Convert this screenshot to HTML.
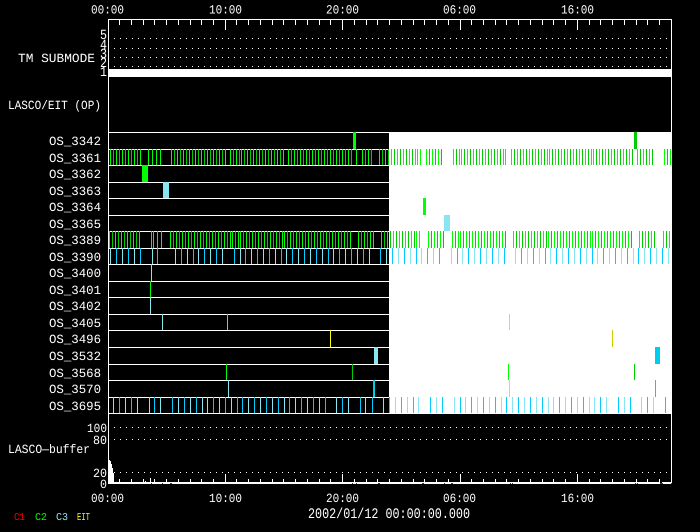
<!DOCTYPE html>
<html><head><meta charset="utf-8"><style>
html,body{margin:0;padding:0;background:#000;width:700px;height:532px;overflow:hidden}
svg{display:block}
text{font-family:"Liberation Mono",monospace;font-size:12.5px;fill:#fff;text-rendering:geometricPrecision}
</style></head><body>
<svg width="700" height="532" viewBox="0 0 700 532" xmlns="http://www.w3.org/2000/svg">
<defs>
<path id="g1" fill="none" stroke-width="16" d="M110 157h31M148 157h1M152 157h1M156 157h1M160 157h1M171 157h55M230 157h10M241 157h43M288 157h64M356 157h1M362 157h10M379 157h10M391 157h25M417 157h1M420 157h1M426 157h16M453 157h7M461 157h43M505 157h1M511 157h37M549 157h43M593 157h40M637 157h16M664 157h7"/>
<path id="g2" fill="none" stroke-width="17" d="M109 239.5h33M151 239.5h1M153 239.5h1M157 239.5h1M161 239.5h1M170 239.5h61M232 239.5h7M240 239.5h43M284 239.5h67M358 239.5h13M373 239.5h1M381 239.5h34M416 239.5h1M419 239.5h1M428 239.5h16M452 239.5h7M460 239.5h48M513 239.5h34M548 239.5h43M592 239.5h40M639 239.5h16M663 239.5h7"/>
<path id="ca" fill="none" stroke-width="16" d="M110 256h31M152 256h1M175 256h19M198 256h25M286 256h43M333 256h37M421 256h19M451 256h7M462 256h43M515 256h31M550 256h43M597 256h37M113 405h25M149 405h1M207 405h31M336 405h13M365 405h1M383 405h31M418 405h1M454 405h7M465 405h37M553 405h37M594 405h13M641 405h13"/>
<path id="cb" fill="none" stroke-width="16" d="M157 256h1M234 256h7M245 256h37M380 256h37M638 256h31M154 405h7M172 405h31M242 405h43M289 405h37M360 405h1M372 405h1M430 405h13M506 405h43M618 405h13M665 405h1"/>
</defs>
<g shape-rendering="crispEdges">
<rect x="389" y="132" width="283" height="281" fill="#fff"/>
<rect x="109" y="69" width="563" height="8" fill="#fff"/>
<path stroke="#fff" stroke-width="1" fill="none" d="M108 132.5H389M108 149.5H389M108 165.5H389M108 182.5H389M108 198.5H389M108 215.5H389M108 231.5H389M108 248.5H389M108 264.5H389M108 281.5H389M108 297.5H389M108 314.5H389M108 330.5H389M108 347.5H389M108 364.5H389M108 380.5H389M108 397.5H389M108 413.5H672M108.5 19V484M671.5 19V484M108 19.5H672"/>
<path fill="none" stroke="#fff" stroke-width="1" stroke-dasharray="1 5" d="M114 38.5H667M114 48.5H667M114 57.5H667M114 66.5H667M114 427.5H667M114 439.5H667M114 472.5H667"/>
<!-- OS_3361 / OS_3389 -->
<use href="#g1" stroke="#00ff00" stroke-dasharray="1 5"/>
<use href="#g1" stroke="#00cc00" stroke-dasharray="1 5" stroke-dashoffset="-3"/>
<use href="#g2" stroke="#00ff00" stroke-dasharray="1 5"/>
<use href="#g2" stroke="#00cc00" stroke-dasharray="1 5" stroke-dashoffset="-3"/>
<!-- OS_3390 / OS_3695 -->
<use href="#ca" stroke="#88e6f0" stroke-dasharray="1 11"/>
<use href="#ca" stroke="#00ccff" stroke-dasharray="1 11" stroke-dashoffset="-6"/>
<use href="#cb" stroke="#00ccff" stroke-dasharray="1 11"/>
<use href="#cb" stroke="#88e6f0" stroke-dasharray="1 11" stroke-dashoffset="-6"/>
<!-- single events -->
<rect x="353" y="132" width="3" height="17" fill="#00ff00"/><rect x="634" y="132" width="3" height="17" fill="#00cc00"/>
<rect x="142" y="165" width="6" height="17" fill="#00ff00"/>
<rect x="163" y="182" width="6" height="16" fill="#88e6f0"/>
<rect x="423" y="198" width="3" height="17" fill="#00ff00"/>
<rect x="444" y="215" width="6" height="16" fill="#88e6f0"/>
<rect x="151" y="264" width="1" height="17" fill="#88e6f0"/>
<rect x="150" y="281" width="1" height="16" fill="#00ff00"/>
<rect x="150" y="297" width="1" height="17" fill="#88e6f0"/>
<rect x="162" y="314" width="1" height="16" fill="#88e6f0"/><rect x="227" y="314" width="1" height="16" fill="#44d8f8"/><rect x="509" y="314" width="1" height="16" fill="#88e6f0"/>
<rect x="330" y="330" width="1" height="17" fill="#ffff00"/><rect x="612" y="330" width="1" height="17" fill="#cccc00"/>
<rect x="374" y="347" width="4" height="17" fill="#88e6f0"/><rect x="655" y="347" width="5" height="17" fill="#00ccee"/>
<rect x="226" y="364" width="1" height="16" fill="#00ff00"/><rect x="352" y="364" width="1" height="16" fill="#00cc00"/><rect x="508" y="364" width="1" height="16" fill="#00ff00"/><rect x="634" y="364" width="1" height="16" fill="#00cc00"/>
<rect x="228" y="380" width="1" height="17" fill="#88e6f0"/><rect x="373" y="380" width="2" height="17" fill="#00ccee"/><rect x="509" y="380" width="1" height="17" fill="#88e6f0"/><rect x="655" y="380" width="1" height="17" fill="#22c0dd"/>
<!-- axes ticks -->
<path stroke="#fff" fill="none" d="M119.5 19V25M131.5 19V25M143.5 19V25M154.5 19V25M166.5 19V25M178.5 19V25M190.5 19V25M201.5 19V25M213.5 19V25M225.5 19V30M236.5 19V25M248.5 19V25M260.5 19V25M272.5 19V25M283.5 19V25M295.5 19V25M307.5 19V25M319.5 19V25M330.5 19V25M342.5 19V30M354.5 19V25M366.5 19V25M377.5 19V25M389.5 19V25M401.5 19V25M413.5 19V25M424.5 19V25M436.5 19V25M448.5 19V25M460.5 19V30M471.5 19V25M483.5 19V25M495.5 19V25M506.5 19V25M518.5 19V25M530.5 19V25M542.5 19V25M553.5 19V25M565.5 19V25M577.5 19V30M589.5 19V25M600.5 19V25M612.5 19V25M624.5 19V25M636.5 19V25M647.5 19V25M659.5 19V25"/>
<path stroke="#fff" fill="none" d="M119.5 479V483M131.5 479V483M143.5 479V483M154.5 479V483M166.5 479V483M178.5 479V483M190.5 479V483M201.5 479V483M213.5 479V483M225.5 474V483M236.5 479V483M248.5 479V483M260.5 479V483M272.5 479V483M283.5 479V483M295.5 479V483M307.5 479V483M319.5 479V483M330.5 479V483M342.5 474V483M354.5 479V483M366.5 479V483M377.5 479V483M389.5 479V483M401.5 479V483M413.5 479V483M424.5 479V483M436.5 479V483M448.5 479V483M460.5 474V483M471.5 479V483M483.5 479V483M495.5 479V483M506.5 479V483M518.5 479V483M530.5 479V483M542.5 479V483M553.5 479V483M565.5 479V483M577.5 474V483M589.5 479V483M600.5 479V483M612.5 479V483M624.5 479V483M636.5 479V483M647.5 479V483M659.5 479V483M150.5 478V483M145.5 481V483"/>
<rect x="108" y="482" width="552" height="2" fill="#fff"/><rect x="662" y="482" width="10" height="2" fill="#fff"/>
<!-- buffer spike -->
<path fill="#fff" d="M109 460H110V461H111V464H112V468H113V473H114V483H109Z"/>
<path fill="#cc0000" d="M151 483h1v1h-1zM162 483h1v1h-1zM170 483h2v1h-2zM352 483h1v1h-1zM356 483h1v1h-1zM378 483h2v1h-2zM422 483h2v1h-2zM444 483h1v1h-1zM451 483h2v1h-2zM510 483h1v1h-1zM512 483h1v1h-1zM635 483h1v1h-1zM637 483h1v1h-1zM660 483h3v1h-3zM671 483h1v1h-1z"/>
</g>
<!-- text -->
<text x="91" y="13.5" textLength="33" lengthAdjust="spacingAndGlyphs">00:00</text>
<text x="209" y="13.5" textLength="33" lengthAdjust="spacingAndGlyphs">10:00</text>
<text x="326" y="13.5" textLength="33" lengthAdjust="spacingAndGlyphs">20:00</text>
<text x="443" y="13.5" textLength="33" lengthAdjust="spacingAndGlyphs">06:00</text>
<text x="561" y="13.5" textLength="33" lengthAdjust="spacingAndGlyphs">16:00</text>
<text x="100" y="39" textLength="7" lengthAdjust="spacingAndGlyphs" style="font-size:14px">5</text>
<text x="100" y="49" textLength="7" lengthAdjust="spacingAndGlyphs" style="font-size:14px">4</text>
<text x="100" y="58" textLength="7" lengthAdjust="spacingAndGlyphs" style="font-size:14px">3</text>
<text x="100" y="67" textLength="7" lengthAdjust="spacingAndGlyphs" style="font-size:14px">2</text>
<text x="100" y="76" textLength="7" lengthAdjust="spacingAndGlyphs" style="font-size:14px">1</text>
<text x="18" y="62" textLength="77" lengthAdjust="spacingAndGlyphs">TM SUBMODE</text>
<text x="8" y="109" textLength="93" lengthAdjust="spacingAndGlyphs">LASCO/EIT (OP)</text>
<g>
<text x="49" y="145" textLength="52" lengthAdjust="spacingAndGlyphs">OS_3342</text>
<text x="49" y="162" textLength="52" lengthAdjust="spacingAndGlyphs">OS_3361</text>
<text x="49" y="178" textLength="52" lengthAdjust="spacingAndGlyphs">OS_3362</text>
<text x="49" y="195" textLength="52" lengthAdjust="spacingAndGlyphs">OS_3363</text>
<text x="49" y="211" textLength="52" lengthAdjust="spacingAndGlyphs">OS_3364</text>
<text x="49" y="228" textLength="52" lengthAdjust="spacingAndGlyphs">OS_3365</text>
<text x="49" y="244" textLength="52" lengthAdjust="spacingAndGlyphs">OS_3389</text>
<text x="49" y="261" textLength="52" lengthAdjust="spacingAndGlyphs">OS_3390</text>
<text x="49" y="277" textLength="52" lengthAdjust="spacingAndGlyphs">OS_3400</text>
<text x="49" y="294" textLength="52" lengthAdjust="spacingAndGlyphs">OS_3401</text>
<text x="49" y="310" textLength="52" lengthAdjust="spacingAndGlyphs">OS_3402</text>
<text x="49" y="327" textLength="52" lengthAdjust="spacingAndGlyphs">OS_3405</text>
<text x="49" y="343" textLength="52" lengthAdjust="spacingAndGlyphs">OS_3496</text>
<text x="49" y="360" textLength="52" lengthAdjust="spacingAndGlyphs">OS_3532</text>
<text x="49" y="377" textLength="52" lengthAdjust="spacingAndGlyphs">OS_3568</text>
<text x="49" y="393" textLength="52" lengthAdjust="spacingAndGlyphs">OS_3570</text>
<text x="49" y="410" textLength="52" lengthAdjust="spacingAndGlyphs">OS_3695</text>
</g>
<text x="87" y="432" textLength="20" lengthAdjust="spacingAndGlyphs">100</text>
<text x="93" y="444" textLength="14" lengthAdjust="spacingAndGlyphs">80</text>
<text x="8" y="453" textLength="82" lengthAdjust="spacingAndGlyphs">LASCO—buffer</text>
<text x="93" y="477" textLength="14" lengthAdjust="spacingAndGlyphs">20</text>
<text x="100" y="488" textLength="7" lengthAdjust="spacingAndGlyphs">0</text>
<text x="91" y="502" textLength="33" lengthAdjust="spacingAndGlyphs">00:00</text>
<text x="209" y="502" textLength="33" lengthAdjust="spacingAndGlyphs">10:00</text>
<text x="326" y="502" textLength="33" lengthAdjust="spacingAndGlyphs">20:00</text>
<text x="443" y="502" textLength="33" lengthAdjust="spacingAndGlyphs">06:00</text>
<text x="561" y="502" textLength="33" lengthAdjust="spacingAndGlyphs">16:00</text>
<text x="308" y="518" textLength="162" lengthAdjust="spacingAndGlyphs" style="font-size:14.5px">2002/01/12 00:00:00.000</text>
<text x="14" y="520" textLength="11" lengthAdjust="spacingAndGlyphs" style="font-size:10.5px;fill:#ff0000">C1</text>
<text x="35" y="520" textLength="12" lengthAdjust="spacingAndGlyphs" style="font-size:10.5px;fill:#00ff00">C2</text>
<text x="56" y="520" textLength="12" lengthAdjust="spacingAndGlyphs" style="font-size:10.5px;fill:#88e6f0">C3</text>
<text x="77" y="520" textLength="13" lengthAdjust="spacingAndGlyphs" style="font-size:10.5px;fill:#ffff00">EIT</text>
</svg>
</body></html>
